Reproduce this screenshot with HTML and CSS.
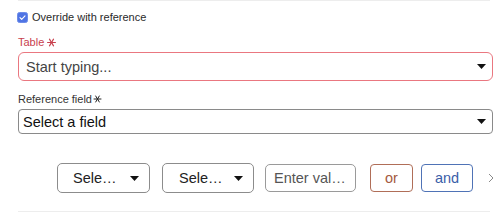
FILE: index.html
```html
<!DOCTYPE html>
<html lang="en">
<head>
<meta charset="utf-8">
<title>Override with reference</title>
<link rel="stylesheet" href="styles.css">
</head>
<body>
<div class="panel">
  <label class="check-row">
    <span class="checkbox">
      <svg width="11" height="11" viewBox="0 0 11 11"><rect x="0.5" y="0.5" width="10" height="10" rx="2" fill="#4f74e4" stroke="#6d8ce9"/><path d="M3 5.6 L4.7 7.3 L8 3.8" fill="none" stroke="#fff" stroke-width="1.1" stroke-linecap="round" stroke-linejoin="round"/></svg>
    </span>
    <span>Override with reference</span>
  </label>

  <div class="field field-table">
    <div class="label label-error">Table
      <svg class="ast" width="9" height="9" viewBox="0 0 8 8"><g stroke="currentColor" stroke-width="1" stroke-linecap="round"><line x1="0.5" y1="4" x2="7.5" y2="4"/><line x1="2.2" y1="1" x2="5.8" y2="7"/><line x1="5.8" y1="1" x2="2.2" y2="7"/></g></svg>
    </div>
    <div class="input input-error">
      <span class="placeholder">Start typing...</span>
      <svg class="caret" width="9" height="5" viewBox="0 0 9 5"><polygon points="0,0 9,0 4.5,5" fill="#111"/></svg>
    </div>
  </div>

  <div class="field field-ref">
    <div class="label">Reference field<svg class="ast ast-dark" width="9" height="8" viewBox="0 0 8 8"><g stroke="currentColor" stroke-width="1" stroke-linecap="round"><line x1="0.5" y1="4" x2="7.5" y2="4"/><line x1="2.2" y1="1" x2="5.8" y2="7"/><line x1="5.8" y1="1" x2="2.2" y2="7"/></g></svg></div>
    <div class="input input-select">
      <span class="value">Select a field</span>
      <svg class="caret" width="9" height="5" viewBox="0 0 9 5"><polygon points="0,0 9,0 4.5,5" fill="#111"/></svg>
    </div>
  </div>

  <div class="condition-row">
    <div class="mini-select w1">
      <span>Sele…</span>
      <svg class="caret" width="9" height="5" viewBox="0 0 9 5"><polygon points="0,0 9,0 4.5,5" fill="#111"/></svg>
    </div>
    <div class="mini-select w2">
      <span>Sele…</span>
      <svg class="caret" width="9" height="5" viewBox="0 0 9 5"><polygon points="0,0 9,0 4.5,5" fill="#111"/></svg>
    </div>
    <div class="value-input">Enter val…</div>
    <button class="logic logic-or">or</button>
    <button class="logic logic-and">and</button>
    <svg class="chevron" width="6" height="10" viewBox="0 0 6 10"><path d="M1 1 L5 5 L1 9" fill="none" stroke="#8a8a8a" stroke-width="1"/></svg>
  </div>
</div>
</body>
</html>
```

FILE: styles.css
```css
html, body {
  margin: 0;
  padding: 0;
  background: #ffffff;
}

body {
  font-family: "Liberation Sans", Arial, sans-serif;
  color: #222;
  width: 502px;
  height: 214px;
  overflow: hidden;
}

.panel {
  margin-left: 18px;
  width: 472px;
  border-top: 1px solid #ededed;
  border-bottom: 1px solid #ededed;
  padding-top: 10px;
  padding-bottom: 18px;
}

.check-row {
  display: flex;
  align-items: center;
  gap: 4px;
  height: 13px;
  font-size: 11px;
  line-height: 13px;
  color: #2a2a2a;
  margin-left: -1px;
}

.checkbox {
  display: flex;
  width: 11px;
  height: 11px;
}

.field {
  display: flex;
  flex-direction: column;
  width: 475px;
}

.field-table {
  margin-top: 12px;
}

.field-ref {
  margin-top: 12px;
}

.label {
  display: flex;
  align-items: center;
  font-size: 11px;
  line-height: 13px;
  height: 13px;
  color: #333;
  margin-bottom: 3px;
}

.label-error {
  color: #c8414e;
  gap: 3px;
}

.ast {
  margin-top: -1px;
}

.ast-dark {
  color: #222;
  margin-left: 1px;
}

.input {
  display: flex;
  align-items: center;
  justify-content: space-between;
  box-sizing: border-box;
  font-size: 14.5px;
}

.input-error {
  height: 29px;
  border: 1.5px solid #ea7780;
  border-radius: 6px;
  padding: 0 6px 0 7px;
}

.placeholder {
  color: #444;
}

.input-select {
  height: 25px;
  border: 1px solid #8a8a8a;
  border-radius: 4px;
  padding: 0 6px 0 4px;
}

.value {
  color: #111;
}

.condition-row {
  display: flex;
  align-items: center;
  margin-top: 29px;
  margin-left: 39px;
  height: 30px;
  font-size: 14.5px;
}

.condition-row > * {
  flex-shrink: 0;
}

.mini-select {
  box-sizing: border-box;
  height: 30px;
  display: flex;
  align-items: center;
  justify-content: space-between;
  border: 1px solid #8c8c8c;
  border-radius: 5px;
  padding: 0 10px 0 15px;
  color: #222;
}

.w1 {
  width: 93px;
}

.w2 {
  width: 92px;
  margin-left: 12px;
  padding-left: 16px;
}

.value-input {
  box-sizing: border-box;
  width: 91px;
  height: 28px;
  margin-left: 11px;
  border: 1px solid #9a9a9a;
  border-radius: 5px;
  display: flex;
  align-items: center;
  padding-left: 8px;
  color: #555;
}

.logic {
  box-sizing: border-box;
  height: 28px;
  background: #fff;
  border-radius: 4px;
  font-family: "Liberation Sans", Arial, sans-serif;
  font-size: 14.5px;
  padding: 0;
  display: flex;
  align-items: center;
  justify-content: center;
}

.logic-or {
  width: 43px;
  margin-left: 14px;
  border: 1px solid #b06e58;
  color: #a45a40;
}

.logic-and {
  width: 52px;
  margin-left: 8px;
  border: 1px solid #4f73b6;
  color: #3b5ea8;
}

.chevron {
  margin-left: 15px;
}
```
